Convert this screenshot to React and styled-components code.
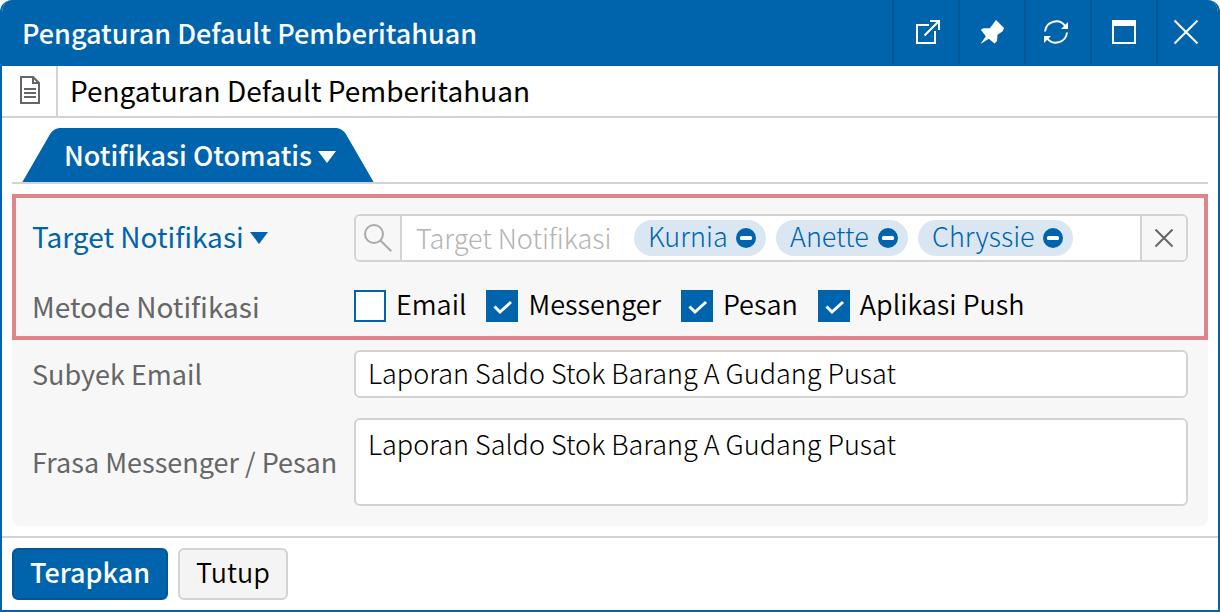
import { useState } from "react";
import styled, { createGlobalStyle } from "styled-components";

const targets = ["Kurnia", "Anette", "Chryssie"];

const methods = [
  { id: "email", label: "Email", checked: false },
  { id: "messenger", label: "Messenger", checked: true },
  { id: "pesan", label: "Pesan", checked: true },
  { id: "push", label: "Aplikasi Push", checked: true },
];

export default function App() {
  const [selected, setSelected] = useState(targets);

  return (
    <>
      <GlobalStyle />
      <Window>
        <TitleBar>
          <WindowTitle>Pengaturan Default Pemberitahuan</WindowTitle>
          <TitleButton aria-label="Buka di jendela baru">
            <OpenIcon />
          </TitleButton>
          <TitleButton aria-label="Sematkan">
            <PinIcon />
          </TitleButton>
          <TitleButton aria-label="Muat ulang">
            <RefreshIcon />
          </TitleButton>
          <TitleButton aria-label="Perbesar">
            <MaximizeIcon />
          </TitleButton>
          <TitleButton aria-label="Tutup jendela">
            <CrossIcon size={26} />
          </TitleButton>
        </TitleBar>

        <PageHeader>
          <PageIcon>
            <DocumentIcon />
          </PageIcon>
          <PageTitle>Pengaturan Default Pemberitahuan</PageTitle>
        </PageHeader>

        <Content>
          <Tabs>
            <Tab>
              Notifikasi Otomatis
              <Caret />
            </Tab>
          </Tabs>

          <Panel>
            <Highlight>
              <Row>
                <LabelButton type="button">
                  Target Notifikasi
                  <Caret />
                </LabelButton>
                <SearchField>
                  <SearchButton type="button" aria-label="Cari">
                    <SearchIcon />
                  </SearchButton>
                  <SearchInput
                    aria-label="Target Notifikasi"
                    placeholder="Target Notifikasi"
                  />
                  <Chips>
                    {selected.map((name) => (
                      <Chip key={name}>
                        {name}
                        <ChipRemove
                          type="button"
                          aria-label={`Hapus ${name}`}
                          onClick={() =>
                            setSelected(selected.filter((n) => n !== name))
                          }
                        >
                          <MinusIcon />
                        </ChipRemove>
                      </Chip>
                    ))}
                  </Chips>
                  <ClearButton
                    type="button"
                    aria-label="Kosongkan"
                    onClick={() => setSelected([])}
                  >
                    <CrossIcon size={20} />
                  </ClearButton>
                </SearchField>
              </Row>
              <Row>
                <Label as="span" $large>
                  Metode Notifikasi
                </Label>
                <Methods>
                  {methods.map((method) => (
                    <Method key={method.id} htmlFor={method.id}>
                      <CheckHolder>
                        <Checkbox
                          id={method.id}
                          defaultChecked={method.checked}
                        />
                        <CheckMark />
                      </CheckHolder>
                      {method.label}
                    </Method>
                  ))}
                </Methods>
              </Row>
            </Highlight>

            <Fields>
              <Row>
                <Label htmlFor="subject">Subyek Email</Label>
                <TextInput
                  id="subject"
                  defaultValue="Laporan Saldo Stok Barang A Gudang Pusat"
                />
              </Row>
              <Row>
                <Label htmlFor="phrase">Frasa Messenger / Pesan</Label>
                <TextArea
                  id="phrase"
                  defaultValue="Laporan Saldo Stok Barang A Gudang Pusat"
                />
              </Row>
            </Fields>
          </Panel>
        </Content>

        <Footer>
          <FooterButton $primary>Terapkan</FooterButton>
          <FooterButton>Tutup</FooterButton>
        </Footer>
      </Window>
    </>
  );
}

function OpenIcon() {
  return (
    <svg width="30" height="26" viewBox="0 0 30 26" fill="none" stroke="#fff" strokeWidth="2">
      <path d="M18 6H6v18h18V12" />
      <path d="M13.5 16.5L27.5 2.5M19 2h9v9" />
    </svg>
  );
}

function PinIcon() {
  return (
    <svg width="24" height="24" viewBox="0 0 24 24" fill="#fff">
      <path d="M16 0L24 8L22.7 11.3L17.5 14.8L17 21L14.6 23.4L8.7 18.8L0.5 24L5.8 16.2L0.8 9.8L3.4 8.2L9.8 8.2L13.6 3.2Z" />
    </svg>
  );
}

function RefreshIcon() {
  return (
    <svg width="30" height="26" viewBox="0 0 30 26" fill="none" stroke="#fff" strokeWidth="2">
      <path d="M2 12.5a11.2 11.2 0 0 1 20.5-5" />
      <path d="M24 13.5a11.2 11.2 0 0 1-20.5 5" />
      <path d="M25 3v7h-7z" fill="#fff" stroke="none" />
      <path d="M1 24v-7h7z" fill="#fff" stroke="none" />
    </svg>
  );
}

function MaximizeIcon() {
  return (
    <svg width="24" height="24" viewBox="0 0 24 24" fill="none">
      <rect x="1" y="1" width="22" height="22" stroke="#fff" strokeWidth="2" />
      <path d="M0 0h24v6H0z" fill="#fff" />
    </svg>
  );
}

function CrossIcon({ size }) {
  return (
    <svg width={size} height={size} fill="none" stroke="currentColor" strokeWidth="2">
      <path d={`M1.5 1.5L${size - 1.5} ${size - 1.5}M${size - 1.5} 1.5L1.5 ${size - 1.5}`} />
    </svg>
  );
}

function DocumentIcon() {
  return (
    <svg width="20" height="28" viewBox="0 0 20 28" fill="none" stroke="#666" strokeWidth="2">
      <path d="M1 1h12l6 6v20H1z" />
      <path d="M13 1v6h6" />
      <path d="M4 13h12M4 17h12M4 21h12" />
    </svg>
  );
}

function SearchIcon() {
  return (
    <svg width="28" height="28" viewBox="0 0 28 28" fill="none" stroke="#aaa" strokeWidth="2">
      <circle cx="10" cy="10" r="9" />
      <path d="M16.5 16.5L27.3 27.3" />
    </svg>
  );
}

function MinusIcon() {
  return (
    <svg width="20" height="20" viewBox="0 0 20 20">
      <circle cx="10" cy="10" r="10" fill="#0064ad" />
      <rect x="4" y="8" width="12" height="4" rx="1.5" fill="#fff" />
    </svg>
  );
}

function CheckMark() {
  return (
    <svg width="32" height="32" viewBox="0 0 32 32" fill="none" stroke="#fff" strokeWidth="3">
      <path d="M8.5 16.5L14 22L25 12" />
    </svg>
  );
}

function Caret() {
  return (
    <CaretSvg width="18" height="12" viewBox="0 0 18 12" fill="currentColor">
      <path d="M0 0h18L9 12z" />
    </CaretSvg>
  );
}

const GlobalStyle = createGlobalStyle`
  * {
    box-sizing: border-box;
  }

  body {
    margin: 0;
    background: #fff;
  }

  body, button, input, textarea {
    font-family: "Noto Sans CJK KR", "Noto Sans", sans-serif;
    font-size: 27px;
    font-weight: 350;
    line-height: 36px;
    color: #000;
  }

  button {
    cursor: pointer;
  }

  svg {
    display: block;
    flex: none;
  }
`;

const CaretSvg = styled.svg`
  margin-top: 4px;
`;

const Window = styled.div`
  border: 2px solid #0064ad;
  border-top: none;
  border-radius: 12px 12px 0 0;
  overflow: hidden;
`;

const TitleBar = styled.header`
  display: flex;
  height: 66px;
  padding-bottom: 2px;
  background: #0064ad;
`;

const WindowTitle = styled.h1`
  flex: 1;
  margin: 0;
  padding: 15px 20px 0;
  font-size: 27px;
  font-weight: 500;
  line-height: 36px;
  color: #fff;
`;

const TitleButton = styled.button`
  display: flex;
  align-items: center;
  justify-content: center;
  width: 66px;
  padding: 0;
  border: none;
  border-left: 2px solid #005796;
  background: none;
  color: #fff;

  &:last-child {
    width: 62px;
    padding-right: 4px;
  }
`;

const PageHeader = styled.div`
  display: flex;
  height: 52px;
  border-bottom: 2px solid #d3d3d3;
`;

const PageIcon = styled.div`
  display: flex;
  align-items: center;
  justify-content: center;
  width: 56px;
  padding: 0 0 2px 2px;
  border-right: 2px solid #d3d3d3;
`;

const PageTitle = styled.h2`
  margin: 0;
  padding: 6px 12px;
  font-size: 28px;
  font-weight: 400;
  line-height: 36px;
`;

const Content = styled.main`
  padding: 10px;
`;

const Tabs = styled.div`
  display: flex;
  padding: 0 26px;
  border-bottom: 2px solid #d3d3d3;
`;

const Tab = styled.button`
  position: relative;
  z-index: 0;
  display: flex;
  align-items: center;
  gap: 6px;
  height: 54px;
  padding: 0 22px 0 26px;
  border: none;
  background: none;
  font-weight: 500;
  color: #fff;

  /* the two slanted halves of the tab */
  &::before,
  &::after {
    content: "";
    position: absolute;
    z-index: -1;
    top: 0;
    bottom: 0;
    width: 60%;
    background: #0064ad;
  }

  &::before {
    left: 0;
    border-top-left-radius: 6px;
    transform: skewX(-30deg);
  }

  &::after {
    right: 0;
    border-top-right-radius: 6px;
    transform: skewX(30deg);
  }
`;

const Panel = styled.form`
  margin-top: 10px;
  border-radius: 0 0 8px 8px;
  background: #f7f7f7;
`;

const Highlight = styled.div`
  display: grid;
  gap: 26px;
  padding: 16px 16px 12px;
  border: 4px solid #e0848c;
`;

const Fields = styled.div`
  display: grid;
  gap: 20px;
  padding: 10px 20px 20px;
`;

const Row = styled.div`
  display: grid;
  grid-template-columns: 322px minmax(0, 1fr);
  align-items: center;
`;

const Label = styled.label`
  font-size: ${({ $large }) => ($large ? "28px" : "27px")};
  font-weight: 400;
  white-space: nowrap;
  color: #666;
`;

const LabelButton = styled.button`
  display: flex;
  align-items: center;
  justify-self: start;
  gap: 6px;
  padding: 0 0 4px;
  border: none;
  background: none;
  font-size: 28px;
  font-weight: 400;
  color: #0064ad;
`;

const SearchField = styled.div`
  display: flex;
  height: 48px;
  border: 2px solid #d3d3d3;
  border-radius: 6px;
  background: #fff;
  overflow: hidden;
`;

const SearchButton = styled.button`
  display: flex;
  align-items: center;
  justify-content: center;
  width: 46px;
  padding: 0;
  border: none;
  border-right: 2px solid #d3d3d3;
  background: #f7f7f7;
`;

const ClearButton = styled(SearchButton)`
  border-right: none;
  border-left: 2px solid #d3d3d3;
  color: #666;
`;

const SearchInput = styled.input`
  width: 232px;
  padding: 0 14px;
  border: none;
  outline: none;
  font-weight: 300;

  &::placeholder {
    color: #b4b4b4;
    opacity: 1;
  }
`;

const Chips = styled.div`
  display: flex;
  flex: 1;
  align-items: center;
  gap: 10px;
`;

const Chip = styled.span`
  display: flex;
  justify-content: space-between;
  gap: 8px;
  min-width: 132px;
  height: 36px;
  padding: 0 10px 0 14px;
  border-radius: 18px;
  background: #dae7f3;
  font-weight: 300;
  line-height: 32px;
  color: #0064ad;
`;

const ChipRemove = styled.button`
  padding: 0;
  border: none;
  background: none;
`;

const Methods = styled.div`
  display: flex;
  gap: 20px;
`;

const Method = styled.label`
  display: flex;
  gap: 10px;
  line-height: 28px;
`;

const CheckHolder = styled.span`
  display: grid;

  > * {
    grid-area: 1 / 1;
  }

  svg {
    pointer-events: none;
  }
`;

const Checkbox = styled.input.attrs({ type: "checkbox" })`
  appearance: none;
  width: 32px;
  height: 32px;
  margin: 0;
  border: 2px solid #0064ad;
  background: #fff;

  &:checked {
    background: #0064ad;
  }
`;

const TextInput = styled.input`
  width: 100%;
  height: 48px;
  padding: 0 12px 4px;
  border: 2px solid #d3d3d3;
  border-radius: 6px;
  background: #fff;
  font-weight: 300;
`;

const TextArea = styled.textarea`
  display: block;
  width: 100%;
  height: 88px;
  padding: 6px 12px;
  border: 2px solid #d3d3d3;
  border-radius: 6px;
  background: #fff;
  font-weight: 300;
  resize: none;
`;

const Footer = styled.footer`
  display: flex;
  gap: 10px;
  padding: 10px;
  border-top: 2px solid #d3d3d3;
`;

const FooterButton = styled.button`
  height: 52px;
  padding: 0 16px 4px;
  border: 2px solid ${({ $primary }) => ($primary ? "#005796" : "#d3d3d3")};
  border-radius: 6px;
  background: ${({ $primary }) => ($primary ? "#0064ad" : "#f4f4f4")};
  font-weight: ${({ $primary }) => ($primary ? 500 : 350)};
  color: ${({ $primary }) => ($primary ? "#fff" : "#000")};
`;
